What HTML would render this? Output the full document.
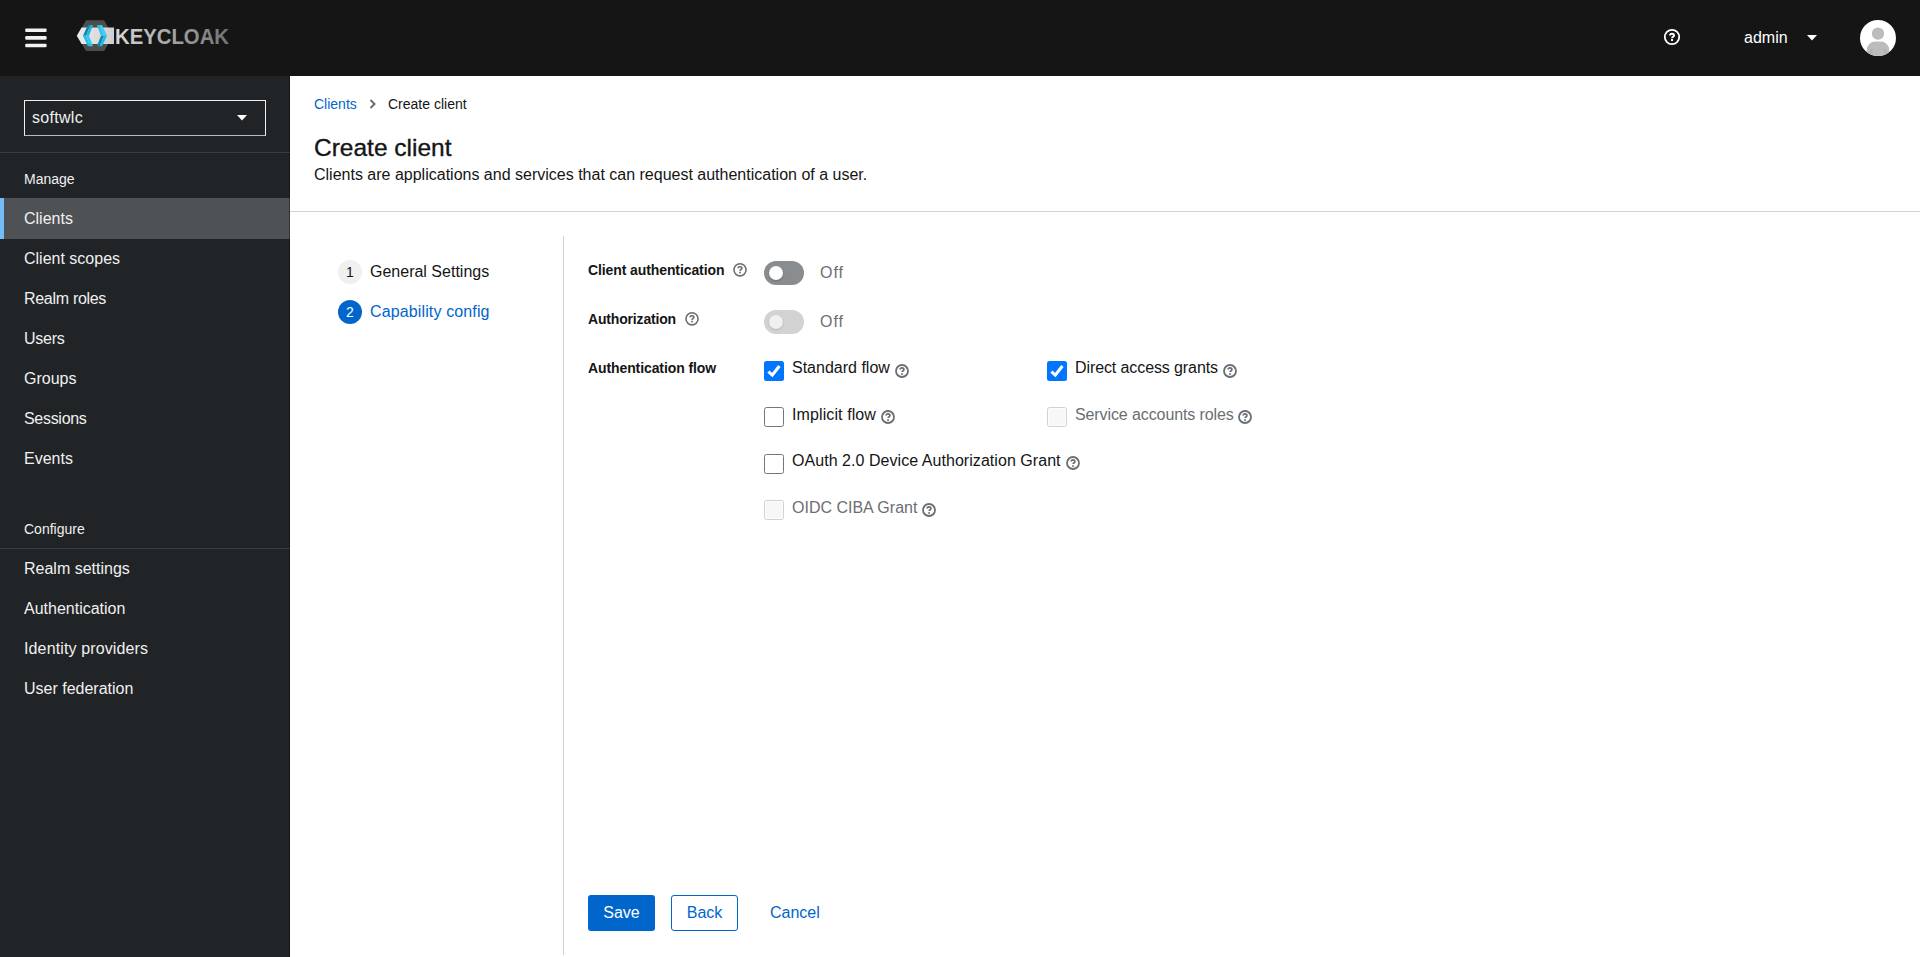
<!DOCTYPE html>
<html><head><meta charset="utf-8">
<style>
*{box-sizing:border-box;margin:0;padding:0}
html,body{width:1920px;height:957px;overflow:hidden;background:#fff;font-family:"Liberation Sans",sans-serif;color:#151515}
.a{position:absolute;white-space:nowrap}
#hdr{position:absolute;left:0;top:0;width:1920px;height:76px;background:#151515}
#side{position:absolute;left:0;top:76px;width:290px;height:881px;background:#212427}
.t16{font-size:16px;line-height:24px}
.t14{font-size:14px;line-height:20px}
.nav{color:#f0f0f0}
.cb{position:absolute;width:20px;height:20px;border-radius:2.5px}
.cb.off{border:1px solid #767676;background:#fff}
.cb.dis{border:1px solid #d2d2d2;background:#f7f7f7;box-shadow:inset 0 0 0 1px #fcfcfc}
.cb.on{background:#0075ff}
.lbl{font-weight:bold;font-size:14px;line-height:20px}
</style></head><body>
<div id="hdr">
  <!-- hamburger -->
  <svg class="a" style="left:20px;top:20px" width="32" height="36" viewBox="0 0 32 36"><g fill="#f2f2f2"><rect x="5.2" y="8.6" width="21.4" height="3.5" rx="1"/><rect x="5.2" y="16.1" width="21.4" height="3.7" rx="1.2"/><rect x="5.2" y="23.7" width="21.4" height="3.5" rx="1"/></g></svg>
  <!-- logo -->
  <svg class="a" style="left:0;top:0" width="240" height="76" viewBox="0 0 240 76">
    <defs>
      <linearGradient id="kg" x1="115" y1="0" x2="229" y2="0" gradientUnits="userSpaceOnUse">
        <stop offset="0" stop-color="#d8d8d8"/><stop offset="1" stop-color="#727272"/>
      </linearGradient>
      <linearGradient id="bg" x1="77" y1="0" x2="114" y2="0" gradientUnits="userSpaceOnUse">
        <stop offset="0" stop-color="#ececec"/><stop offset="1" stop-color="#cfcfcf"/>
      </linearGradient>
    </defs>
    <polygon points="86,20.3 104.1,20.3 112.9,35.7 104.1,51.1 86,51.1 77.2,35.7" fill="#4d4d4d"/>
    <polygon points="76.8,35.7 81.6,27.6 114,27.6 114,43.9 81.6,43.9" fill="url(#bg)"/>
    <polygon points="87.9,25.1 90.45,25.1 86,35.7 83,35.7" fill="#0a86ad"/>
    <polygon points="90.45,25.1 93,25.1 89,35.7 86,35.7" fill="#22b4de"/>
    <polygon points="83,35.7 86,35.7 90.45,46.2 87.9,46.2" fill="#1cbfec"/>
    <polygon points="86,35.7 89,35.7 93,46.2 90.45,46.2" fill="#38c8ef"/>
    <polygon points="96.9,25.1 99.45,25.1 104,35.7 101,35.7" fill="#2fc2ea"/>
    <polygon points="99.45,25.1 102,25.1 107.1,35.7 104,35.7" fill="#3ccff5"/>
    <polygon points="101,35.7 104,35.7 99.45,46.2 96.9,46.2" fill="#0a8ab2"/>
    <polygon points="104,35.7 107.1,35.7 102,46.2 99.45,46.2" fill="#1cbbe8"/>
    <text x="115" y="43.9" font-family="Liberation Sans" font-weight="bold" font-size="22" textLength="114" lengthAdjust="spacingAndGlyphs" fill="url(#kg)">KEYCLOAK</text>
  </svg>
  <!-- help -->
  <svg class="a" style="left:1663px;top:28px" width="18" height="18" viewBox="0 0 18 18">
    <circle cx="9" cy="9" r="7.2" fill="none" stroke="#fff" stroke-width="1.8"/>
    <path d="M7 7.6c0-1.2.9-1.9 2-1.9s2 .7 2 1.7c0 .9-.6 1.2-1.1 1.5-.5.3-.8.6-.8 1.1v.3" fill="none" stroke="#fff" stroke-width="2"/>
    <rect x="8" y="11" width="2" height="2" fill="#fff"/>
  </svg>
  <div class="a t16" style="left:1744px;top:26px;color:#fff">admin</div>
  <svg class="a" style="left:1807px;top:35px" width="10" height="6" viewBox="0 0 10 6"><polygon points="0,0 10,0 5,5.5" fill="#fff"/></svg>
  <!-- avatar -->
  <svg class="a" style="left:1860px;top:20px" width="36" height="36" viewBox="0 0 36 36">
    <defs><clipPath id="cc"><circle cx="18" cy="18" r="18"/></clipPath></defs>
    <circle cx="18" cy="18" r="18" fill="#fff"/>
    <g clip-path="url(#cc)">
      <circle cx="18" cy="13.6" r="6.2" fill="#bcbcbc"/>
      <path d="M17.2 15 a6 6 0 0 1 0 -2.8" fill="none"/>
      <path d="M6.8 38 V30 a8.5 8.5 0 0 1 8.5 -8.5 h5.4 a8.5 8.5 0 0 1 8.5 8.5 V38 Z" fill="#bcbcbc"/>
      <path d="M10.5 36 v-4 a3 3 0 0 1 2 -2.6" fill="none" stroke="#afafaf" stroke-width="1.5"/>
      <path d="M25.5 36 v-4 a3 3 0 0 0 -2 -2.6" fill="none" stroke="#afafaf" stroke-width="1.5"/>
    </g>
  </svg>
</div>

<div id="side">
<div class="a" style="left:24px;top:24px;width:242px;height:36px;border:1px solid #f0f0f0;border-bottom-color:#b8bbbe"></div>
<div class="a t16 nav" style="letter-spacing:0.3px;left:32px;top:29.5px">softwlc</div>
<svg class="a" style="left:237px;top:39px" width="10" height="6" viewBox="0 0 10 6"><polygon points="0,0 10,0 5,5.5" fill="#fff"/></svg>
<div class="a" style="left:0;top:76px;width:290px;height:1px;background:#3c3f42"></div>
<div class="a t14 nav" style="left:24px;top:93px">Manage</div>
<div class="a" style="left:0;top:122px;width:290px;height:41px;background:#4f5255"></div>
<div class="a" style="left:0;top:122px;width:4px;height:41px;background:#73bcf7"></div>
<div class="a t16 nav" style="left:24px;top:131px">Clients</div>
<div class="a t16 nav" style="left:24px;top:171px">Client scopes</div>
<div class="a t16 nav" style="letter-spacing:-0.3px;left:24px;top:211px">Realm roles</div>
<div class="a t16 nav" style="letter-spacing:-0.25px;left:24px;top:251px">Users</div>
<div class="a t16 nav" style="left:24px;top:291px">Groups</div>
<div class="a t16 nav" style="letter-spacing:-0.3px;left:24px;top:331px">Sessions</div>
<div class="a t16 nav" style="left:24px;top:371px">Events</div>
<div class="a t14 nav" style="left:24px;top:443px">Configure</div>
<div class="a" style="left:0;top:472px;width:290px;height:1px;background:#3c3f42"></div>
<div class="a t16 nav" style="left:24px;top:481px">Realm settings</div>
<div class="a t16 nav" style="left:24px;top:521px">Authentication</div>
<div class="a t16 nav" style="letter-spacing:0.13px;left:24px;top:561px">Identity providers</div>
<div class="a t16 nav" style="left:24px;top:601px">User federation</div>
<div class="a" style="left:289px;top:0;width:1px;height:881px;background:rgba(0,0,0,.38)"></div>
</div>

<div id="main">
<div class="a t14" style="left:314px;top:94px;color:#0066cc">Clients</div>
<svg class="a" style="left:368.5px;top:99px" width="8" height="10" viewBox="0 0 8 10"><path d="M1.5 1 L5.5 5 L1.5 9" fill="none" stroke="#6a6e73" stroke-width="2"/></svg>
<div class="a t14" style="left:388px;top:94px;color:#151515">Create client</div>
<div class="a" style="left:314px;top:133px;font-size:24.5px;line-height:30px;color:#151515;-webkit-text-stroke:0.35px #151515">Create client</div>
<div class="a t16" style="left:314px;top:163px;color:#151515">Clients are applications and services that can request authentication of a user.</div>
<div class="a" style="left:290px;top:211px;width:1630px;height:1px;background:#d2d2d2"></div>
<div class="a" style="left:338px;top:260px;width:24px;height:24px;border-radius:50%;background:#f0f0f0;color:#151515;font-size:14px;line-height:24px;text-align:center">1</div>
<div class="a t16" style="left:370px;top:260px;color:#151515">General Settings</div>
<div class="a" style="left:338px;top:300px;width:24px;height:24px;border-radius:50%;background:#0066cc;color:#fff;font-size:14px;line-height:24px;text-align:center">2</div>
<div class="a t16" style="letter-spacing:0.13px;left:370px;top:300px;color:#0066cc">Capability config</div>
<div class="a" style="left:563px;top:236px;width:1px;height:719px;background:#d2d2d2"></div>
<div class="a lbl" style="letter-spacing:-0.1px;left:588px;top:260px">Client authentication</div>
<svg class="a" style="left:732px;top:262px" width="16" height="16" viewBox="0 0 16 16"><circle cx="8" cy="7.8" r="6.05" fill="none" stroke="#6a6e73" stroke-width="1.6"/><path d="M6.1 6.3c0-1 .8-1.6 1.9-1.6s1.9.6 1.9 1.5c0 .8-.5 1.1-1.1 1.4-.5.3-.7.5-.7 1.1v.2" fill="none" stroke="#6a6e73" stroke-width="1.6"/><rect x="7.2" y="9.8" width="1.7" height="1.6" fill="#6a6e73"/></svg>
<div class="a" style="left:764px;top:261px;width:40px;height:24px;border-radius:12px;background:#8a8d90"></div>
<div class="a" style="left:769px;top:266px;width:14px;height:14px;border-radius:50%;background:#fff;box-shadow:0 1px 2px rgba(0,0,0,.25)"></div>
<div class="a t16" style="left:820px;top:261px;letter-spacing:1px;color:#6a6e73">Off</div>
<div class="a lbl" style="letter-spacing:-0.17px;left:588px;top:309px">Authorization</div>
<svg class="a" style="left:684px;top:311px" width="16" height="16" viewBox="0 0 16 16"><circle cx="8" cy="7.8" r="6.05" fill="none" stroke="#6a6e73" stroke-width="1.6"/><path d="M6.1 6.3c0-1 .8-1.6 1.9-1.6s1.9.6 1.9 1.5c0 .8-.5 1.1-1.1 1.4-.5.3-.7.5-.7 1.1v.2" fill="none" stroke="#6a6e73" stroke-width="1.6"/><rect x="7.2" y="9.8" width="1.7" height="1.6" fill="#6a6e73"/></svg>
<div class="a" style="left:764px;top:310px;width:40px;height:24px;border-radius:12px;background:#d2d2d2"></div>
<div class="a" style="left:769px;top:315px;width:14px;height:14px;border-radius:50%;background:#f0f0f0;box-shadow:0 1px 2px rgba(0,0,0,.15)"></div>
<div class="a t16" style="left:820px;top:310px;letter-spacing:1px;color:#6a6e73">Off</div>
<div class="a lbl" style="letter-spacing:-0.1px;left:588px;top:358px">Authentication flow</div>
<svg class="a" style="left:764px;top:361px" width="20" height="20" viewBox="0 0 20 20"><rect width="20" height="20" rx="2.5" fill="#0075ff"/><path d="M4.4 10.6 L8.3 14.1 L15.4 5" fill="none" stroke="#fff" stroke-width="3.1"/></svg>
<div class="a t16" style="left:792px;top:356px">Standard flow</div>
<svg class="a" style="left:894px;top:363px" width="16" height="16" viewBox="0 0 16 16"><circle cx="8" cy="8" r="6" fill="none" stroke="#6a6e73" stroke-width="1.8"/><path d="M6.1 6.6c0-1.1.8-1.8 1.9-1.8s1.9.7 1.9 1.7c0 .9-.6 1.2-1.1 1.5-.4.3-.6.5-.6 1" fill="none" stroke="#6a6e73" stroke-width="1.7"/><rect x="7.2" y="10.2" width="1.7" height="1.7" fill="#6a6e73"/></svg>
<svg class="a" style="left:1047px;top:361px" width="20" height="20" viewBox="0 0 20 20"><rect width="20" height="20" rx="2.5" fill="#0075ff"/><path d="M4.4 10.6 L8.3 14.1 L15.4 5" fill="none" stroke="#fff" stroke-width="3.1"/></svg>
<div class="a t16" style="letter-spacing:-0.1px;left:1075px;top:356px">Direct access grants</div>
<svg class="a" style="left:1222px;top:363px" width="16" height="16" viewBox="0 0 16 16"><circle cx="8" cy="8" r="6" fill="none" stroke="#6a6e73" stroke-width="1.8"/><path d="M6.1 6.6c0-1.1.8-1.8 1.9-1.8s1.9.7 1.9 1.7c0 .9-.6 1.2-1.1 1.5-.4.3-.6.5-.6 1" fill="none" stroke="#6a6e73" stroke-width="1.7"/><rect x="7.2" y="10.2" width="1.7" height="1.7" fill="#6a6e73"/></svg>
<div class="cb off" style="left:764px;top:407px"></div>
<div class="a t16" style="letter-spacing:0.1px;left:792px;top:403px">Implicit flow</div>
<svg class="a" style="left:880px;top:409px" width="16" height="16" viewBox="0 0 16 16"><circle cx="8" cy="8" r="6" fill="none" stroke="#6a6e73" stroke-width="1.8"/><path d="M6.1 6.6c0-1.1.8-1.8 1.9-1.8s1.9.7 1.9 1.7c0 .9-.6 1.2-1.1 1.5-.4.3-.6.5-.6 1" fill="none" stroke="#6a6e73" stroke-width="1.7"/><rect x="7.2" y="10.2" width="1.7" height="1.7" fill="#6a6e73"/></svg>
<div class="cb dis" style="left:1047px;top:407px"></div>
<div class="a t16" style="letter-spacing:-0.1px;left:1075px;top:403px;color:#6a6e73">Service accounts roles</div>
<svg class="a" style="left:1237px;top:409px" width="16" height="16" viewBox="0 0 16 16"><circle cx="8" cy="8" r="6" fill="none" stroke="#6a6e73" stroke-width="1.8"/><path d="M6.1 6.6c0-1.1.8-1.8 1.9-1.8s1.9.7 1.9 1.7c0 .9-.6 1.2-1.1 1.5-.4.3-.6.5-.6 1" fill="none" stroke="#6a6e73" stroke-width="1.7"/><rect x="7.2" y="10.2" width="1.7" height="1.7" fill="#6a6e73"/></svg>
<div class="cb off" style="left:764px;top:454px"></div>
<div class="a t16" style="letter-spacing:0.05px;left:792px;top:449px">OAuth 2.0 Device Authorization Grant</div>
<svg class="a" style="left:1065px;top:455px" width="16" height="16" viewBox="0 0 16 16"><circle cx="8" cy="8" r="6" fill="none" stroke="#6a6e73" stroke-width="1.8"/><path d="M6.1 6.6c0-1.1.8-1.8 1.9-1.8s1.9.7 1.9 1.7c0 .9-.6 1.2-1.1 1.5-.4.3-.6.5-.6 1" fill="none" stroke="#6a6e73" stroke-width="1.7"/><rect x="7.2" y="10.2" width="1.7" height="1.7" fill="#6a6e73"/></svg>
<div class="cb dis" style="left:764px;top:500px"></div>
<div class="a t16" style="left:792px;top:496px;color:#6a6e73">OIDC CIBA Grant</div>
<svg class="a" style="left:921px;top:502px" width="16" height="16" viewBox="0 0 16 16"><circle cx="8" cy="8" r="6" fill="none" stroke="#6a6e73" stroke-width="1.8"/><path d="M6.1 6.6c0-1.1.8-1.8 1.9-1.8s1.9.7 1.9 1.7c0 .9-.6 1.2-1.1 1.5-.4.3-.6.5-.6 1" fill="none" stroke="#6a6e73" stroke-width="1.7"/><rect x="7.2" y="10.2" width="1.7" height="1.7" fill="#6a6e73"/></svg>
<div class="a t16" style="left:588px;top:895px;width:67px;height:36px;border-radius:3px;background:#0066cc;color:#fff;text-align:center;line-height:36px">Save</div>
<div class="a t16" style="left:671px;top:895px;width:67px;height:36px;border-radius:3px;border:1px solid #0066cc;color:#0066cc;text-align:center;line-height:34px">Back</div>
<div class="a t16" style="left:770px;top:901px;color:#0066cc">Cancel</div>
</div>
</body></html>
